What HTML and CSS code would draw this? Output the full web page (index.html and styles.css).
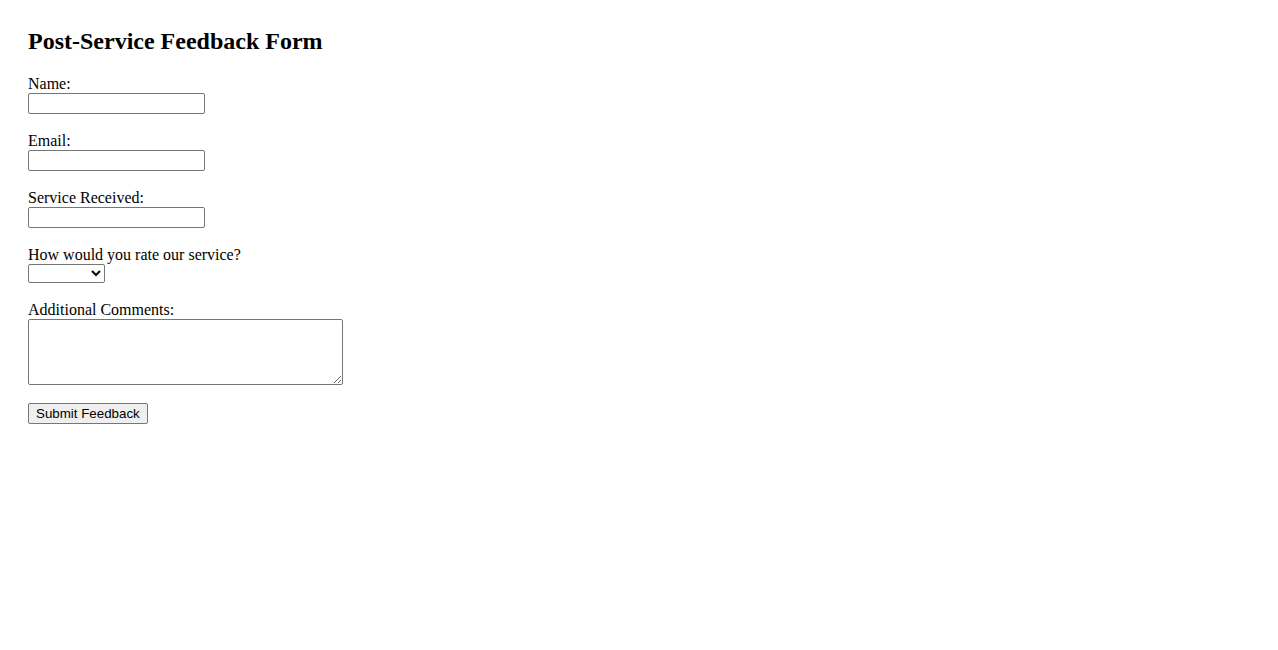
FILE: index.html
```html
<!DOCTYPE html>
<html lang="en">
<head>
    <meta charset="UTF-8">
    <meta name="viewport" content="width=device-width, initial-scale=1.0">
    <title>Post-Service Feedback Form</title>
    <link rel="stylesheet" href="styles.css">
</head>
<body>
    <div class="container">
        <h2>Post-Service Feedback Form</h2>
        <form id="feedbackForm">
            <div class="field">
                <label for="name">Name:</label>
                <input type="text" id="name" name="name">
            </div>
            <div class="field">
                <label for="email">Email:</label>
                <input type="email" id="email" name="email">
            </div>
            <div class="field">
                <label for="service">Service Received:</label>
                <input type="text" id="service" name="service">
            </div>
            <div class="field">
                <label for="rating">How would you rate our service?</label>
                <select id="rating" name="rating">
                    <option value=""></option>
                    <option value="5">Excellent</option>
                    <option value="4">Good</option>
                    <option value="3">Average</option>
                    <option value="2">Poor</option>
                    <option value="1">Very Poor</option>
                </select>
            </div>
            <div class="field">
                <label for="comments">Additional Comments:</label>
                <textarea id="comments" name="comments"></textarea>
            </div>
            <button type="submit">Submit Feedback</button>
        </form>
    </div>
</body>
</html>
```

FILE: styles.css
```css
body {
    margin: 8px;
    font-family: "Liberation Serif", "Times New Roman", serif;
    font-size: 16px;
    color: #000;
    background: #fff;
}
.container {
    padding: 19px 20px 20px 20px;
}
h2 {
    margin: 0 0 20px 0;
    font-size: 24px;
    line-height: 28px;
}
.field {
    margin-bottom: 18px;
}
.field label {
    display: block;
    line-height: 18px;
}
.field input,
.field select,
.field textarea {
    display: block;
    box-sizing: border-box;
    margin: 0;
    border: 1px solid #767676;
    border-radius: 2px;
    background: #fff;
}
.field input {
    width: 177px;
    height: 21px;
    padding: 1px 2px;
}
.field select {
    width: 77px;
    height: 19px;
    padding: 0;
    font-family: "Liberation Sans", Arial, sans-serif;
    font-size: 13px;
}
.field textarea {
    width: 315px;
    height: 66px;
    padding: 2px;
    font-family: "Liberation Mono", monospace;
    font-size: 13px;
}
button {
    box-sizing: border-box;
    height: 21px;
    padding: 1px 7px;
    font-family: "Liberation Sans", Arial, sans-serif;
    font-size: 13.33px;
    color: #000;
    background: #efefef;
    border: 1px solid #767676;
    border-radius: 2px;
}
```
